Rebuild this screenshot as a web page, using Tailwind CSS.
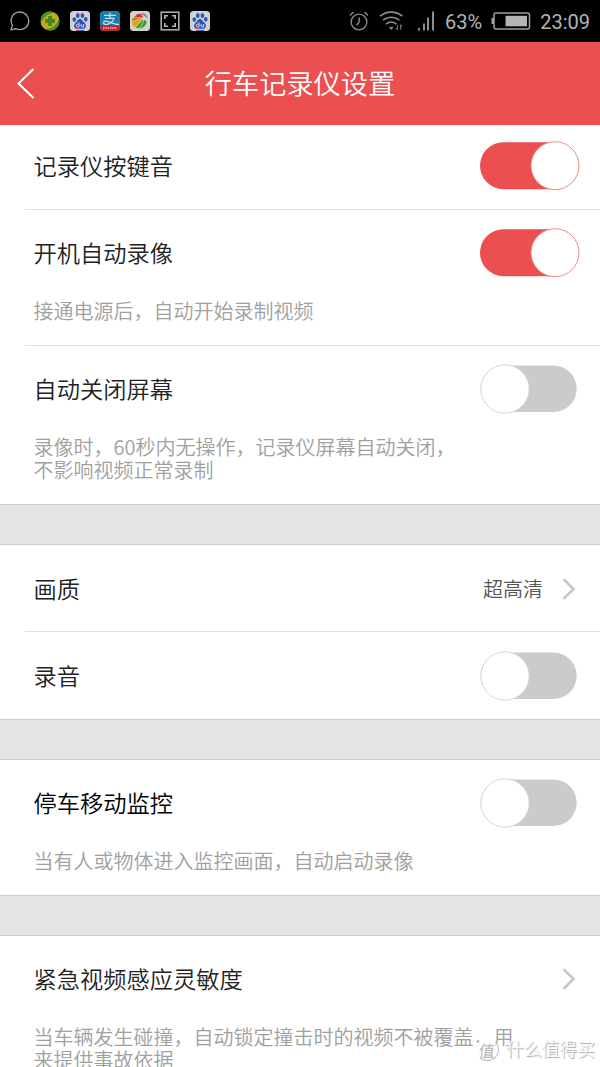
<!DOCTYPE html>
<html lang="zh-CN">
<head>
  <meta charset="UTF-8">
  <meta name="viewport" content="width=device-width, initial-scale=1.0">
  <title>行车记录仪设置</title>
  <!-- Tailwind CSS -->
  <script src="https://cdn.jsdelivr.net/npm/@tailwindcss/browser@4"></script>
</head>
<body class="bg-white">

  <!-- Shared shapes -->
  <svg class="hidden">
    <symbol id="toggle-on" viewBox="0 0 100 50">
      <rect x="0" y="1.2" width="97" height="47" rx="23.5" fill="#eb4f50"/>
      <circle cx="75" cy="24.7" r="24" fill="#fff" stroke="#f08a8b" stroke-width="1"/>
    </symbol>
    <symbol id="toggle-off" viewBox="0 0 100 50">
      <rect x="0.5" y="1.5" width="96.2" height="46.6" rx="23.3" fill="#cbcbcb"/>
      <circle cx="25" cy="25" r="24.2" fill="#fff" stroke="#d2d2d2" stroke-width="0.9"/>
    </symbol>
    <symbol id="arrow" viewBox="0 0 14 24">
      <path d="M1.5 2.2 L11.6 12 L1.5 21.8" fill="none" stroke="#c7c7cc" stroke-width="2.6"/>
    </symbol>
    <symbol id="paw" viewBox="0 0 20 20">
      <rect width="20" height="20" rx="3.5" fill="#cfd1d6"/>
      <g fill="#2c55b5">
        <ellipse cx="4.3" cy="8.6" rx="1.8" ry="2.4"/>
        <ellipse cx="7.8" cy="4.4" rx="1.8" ry="2.5"/>
        <ellipse cx="12.4" cy="4.4" rx="1.8" ry="2.5"/>
        <ellipse cx="15.8" cy="8.3" rx="1.8" ry="2.4"/>
        <path d="M10 8 C12.4 8 12.6 10.4 14.6 12 C17 14 16 17.8 13 17.8 H7 C4 17.8 3 14 5.4 12 C7.4 10.4 7.6 8 10 8Z"/>
      </g>
      <path d="M9 11.4 V16 M9 16 H7.6 A1.3 1.3 0 0 1 7.6 13.2 H9 M11.2 13 V15 Q11.2 16 12.2 16 H13.6 V13" fill="none" stroke="#d8dbe2" stroke-width="1"/>
      <path d="M6 19 H10 V20 H6Z" fill="#c04040"/>
      <path d="M10 19 H14 V20 H10Z" fill="#2c55b5"/>
    </symbol>
  </svg>

  <div class="flex h-[1067px] w-[600px] flex-col overflow-hidden font-['Noto_Sans_CJK_SC',sans-serif] font-[350] text-[#222]">

    <!-- Status bar -->
    <div class="flex h-[42px] shrink-0 items-center bg-black px-[10px] font-[Roboto,sans-serif] text-xl font-normal text-[#b4b4b4]">
      <div class="flex gap-[10px]">
        <svg class="size-5" viewBox="0 0 20 20" fill="none" stroke="#a8a8a8" stroke-width="1.3"><path d="M1 18.9 L2.4 14.4 A8.8 8.8 0 1 1 5.8 17.6 Z" stroke-linejoin="round"/></svg>
        <svg class="size-5" viewBox="0 0 20 20">
          <circle cx="10" cy="10" r="9.5" fill="#c9a81c"/>
          <path d="M1 7 C3 1 10 -1 15 2 C9 2 4 5 1 12Z M19 13 C17 19 10 21 5 18 C11 18 16 15 19 8Z" fill="#3f962b"/>
          <path d="M8 5 H12 V8 H15 V12 H12 V15 H8 V12 H5 V8 H8Z" fill="#3b8b23"/>
        </svg>
        <svg class="size-5"><use href="#paw"/></svg>
        <svg class="size-5" viewBox="0 0 20 20">
          <rect width="20" height="20" rx="3.5" fill="#1580ae"/>
          <path d="M0 14 H20 V16.5 A3.5 3.5 0 0 1 16.5 20 H3.5 A3.5 3.5 0 0 1 0 16.5Z" fill="#b72a2c"/>
          <path d="M4 4.3 H16 M10 1.8 V7 M5 7.3 H14 C13 11 9 13.6 6 13.6 C2.5 13.6 3 10 6 10.2 C10 10.5 13 13.5 19 13.5" fill="none" stroke="#d0d8de" stroke-width="1.3"/>
          <path d="M3 17 H17" stroke="#dc9c9c" stroke-width="2" stroke-dasharray="1.5 .8"/>
        </svg>
        <svg class="size-5" viewBox="0 0 20 20">
          <rect width="20" height="20" rx="3.5" fill="#d2d2cf"/>
          <path d="M4.500 6 C6 3 9 2 11 3 L13 6Z" fill="#c93a2c"/>
          <path d="M2 10.500 C2 8 3 7 4 6.500 H15 C11 7 7 8 2 10.500Z" fill="#dc6c1e"/>
          <path d="M2 11.500 C6 9 10 7.800 13 7.800 L5 16 C3 15 2 14 2 11.500Z" fill="#d8a714"/>
          <path d="M5.500 16.500 L13 8.500 C13 12 11 16 8.500 17.500Z" fill="#489b2a"/>
          <path d="M10 17.500 C12.500 14.500 13.500 12 13.800 9 L16.500 10 C17 13 14 17 10 17.500Z" fill="#319b32"/>
          <path d="M11 2 C15 2 17 4 18 8 C16 5.500 13 4.500 11 2Z" fill="#ac62c2"/>
        </svg>
        <svg class="size-5" viewBox="0 0 20 20" fill="none" stroke="#b4b4b4">
          <rect x="1.2" y="1.2" width="17.6" height="17.6" stroke-width="1.5"/>
          <path d="M4.8 8 V4.8 H8 M12 4.8 H15.2 V8 M15.2 12 V15.2 H12 M8 15.2 H4.8 V12" stroke-width="1.6"/>
        </svg>
        <svg class="size-5"><use href="#paw"/></svg>
      </div>

      <div class="ml-auto flex items-center">
        <!-- Alarm -->
        <svg class="mr-[10px] h-5 w-5" viewBox="0 0 20 20" fill="none" stroke="#8c8c8c" stroke-width="1.4">
          <circle cx="10" cy="11" r="7.9"/>
          <path d="M10.2 6.5 V11 L7.5 14.3 M1 4.5 L4.5 1 M15.5 1 L19 4.5"/>
        </svg>
        <!-- Wifi -->
        <svg class="mr-[14px] h-5 w-[25px]" viewBox="0 0 25 20" fill="none" stroke="#8c8c8c" stroke-width="1.6">
          <path d="M1 5.2 C7.5 -.3 17 -.3 23.5 5.2 M4 9.2 C9 5.200 15.5 5.200 20.5 9.2 M7 13.2 C10.5 10.3 14 10.3 17.5 13.2"/>
          <path d="M9.8 16 H14.6 L12.2 19Z" fill="#8c8c8c" stroke="none"/>
          <path d="M18.5 14 V18.5 M17 17 L18.5 19 M21.5 19 V14 M23 16 L21.5 13.5" stroke="#666" stroke-width="1.2"/>
        </svg>
        <!-- Signal -->
        <svg class="mr-[10px] h-5 w-[17px]" viewBox="0 0 17 20" fill="#8c8c8c">
          <rect x="0" y="17" width="2" height="2.500"/>
          <rect x="5" y="12.500" width="2" height="7"/>
          <rect x="9" y="6.500" width="2" height="13"/>
          <rect x="14" y="0.500" width="2" height="19"/>
        </svg>
        <span class="pt-[2px]">63%</span>
        <!-- Battery -->
        <svg class="ml-[9px] mr-[9px] h-[18px] w-[40px]" viewBox="0 0 40 18">
          <rect x="3" y="1" width="35.5" height="16" rx="2" fill="none" stroke="#a0a0a0" stroke-width="1.5"/>
          <rect x="0.500" y="6" width="2.500" height="6" fill="#a0a0a0"/>
          <rect x="14.5" y="3.8" width="21.5" height="10.5" fill="#b4b4b4"/>
        </svg>
        <span class="pt-[2px]">23:09</span>
      </div>
    </div>

    <!-- Title bar -->
    <header class="grid h-[83px] shrink-0 grid-cols-[100px_1fr_100px] items-center bg-[#eb4f50] text-white">
      <svg class="ml-4 h-8 w-5" viewBox="0 0 20 32" fill="none" stroke="#fff" stroke-width="2"><path d="M17.5 1 L2.5 15.5 L17.5 30"/></svg>
      <h1 class="pb-[2px] text-center text-[27.2px] leading-none font-[350]">行车记录仪设置</h1>
    </header>

    <!-- Settings -->
    <main class="shrink-0">
      <section class="border-b border-[#cfcfcf]">
        <div class="ml-[25px] flex h-[85px] items-center justify-between border-b border-[#e0e0e0] pb-[3px] pl-[8.5px] pr-5">
          <span class="text-[23.25px] leading-none">记录仪按键音</span>
          <svg class="h-[50px] w-[100px]"><use href="#toggle-on"/></svg>
        </div>

        <div class="ml-[25px] border-b border-[#e0e0e0] pl-[8.5px] pr-5">
          <div class="flex h-[87px] items-center justify-between pb-[2px]">
            <span class="text-[23.25px] leading-none">开机自动录像</span>
            <svg class="h-[50px] w-[100px]"><use href="#toggle-on"/></svg>
          </div>
          <p class="h-[48px] pt-[2px] text-[20px] leading-[23px] text-[#a0a0a0]">接通电源后，自动开始录制视频</p>
        </div>

        <div class="ml-[25px] pl-[8.5px] pr-5">
          <div class="flex h-[87px] items-center justify-between pb-[2px]">
            <span class="text-[23.25px] leading-none">自动关闭屏幕</span>
            <svg class="h-[50px] w-[100px]"><use href="#toggle-off"/></svg>
          </div>
          <p class="h-[71px] pt-[2px] text-[20px] leading-[23px] text-[#a0a0a0]">录像时，60秒内无操作，记录仪屏幕自动关闭，<br>不影响视频正常录制</p>
        </div>
      </section>

      <div class="h-[39px] bg-[#e4e4e4]"></div>

      <section class="border-y border-[#cfcfcf]">
        <div class="ml-[25px] flex h-[87px] items-center border-b border-[#e0e0e0] pt-[1px] pl-[8.5px] pr-6">
          <span class="text-[23.25px] leading-none">画质</span>
          <span class="ml-auto text-[20px] leading-none text-[#555]">超高清</span>
          <svg class="ml-[19px] h-6 w-[14px]"><use href="#arrow"/></svg>
        </div>
        <div class="ml-[25px] flex h-[87px] items-center justify-between pl-[8.5px] pr-5">
          <span class="text-[23.25px] leading-none">录音</span>
          <svg class="h-[50px] w-[100px]"><use href="#toggle-off"/></svg>
        </div>
      </section>

      <div class="h-[39px] bg-[#e4e4e4]"></div>

      <section class="border-y border-[#cfcfcf] pl-[33.5px] pr-5">
        <div class="flex h-[87px] items-center justify-between pb-[2px]">
          <span class="text-[23.25px] leading-none text-black">停车移动监控</span>
          <svg class="h-[50px] w-[100px]"><use href="#toggle-off"/></svg>
        </div>
        <p class="h-[48px] pt-[2px] text-[20px] leading-[23px] text-[#a0a0a0]">当有人或物体进入监控画面，自动启动录像</p>
      </section>

      <div class="h-[39px] bg-[#e4e4e4]"></div>

      <section class="border-t border-[#cfcfcf] pl-[33.5px] pr-6">
        <div class="flex h-[87px] items-center justify-between pb-[2px]">
          <span class="text-[23.25px] leading-none">紧急视频感应灵敏度</span>
          <svg class="h-6 w-[14px]"><use href="#arrow"/></svg>
        </div>
        <p class="pt-[2px] text-[20px] leading-[23px] text-[#a0a0a0]">当车辆发生碰撞，自动锁定撞击时的视频不被覆盖，用<br>来提供事故依据</p>
      </section>
    </main>
  </div>

  <!-- Watermark -->
  <div class="absolute left-[476px] top-[1038px] flex items-center gap-[7px] font-['Noto_Sans_CJK_SC',sans-serif] font-[350]">
    <span class="flex size-[23px] items-center justify-center rounded-full border border-white border-r-[#c4c4c4] border-b-[#c4c4c4] bg-white/80 text-[16px] leading-none text-[#b0b0b0]"><i class="-skew-x-6 not-italic">值</i></span>
    <span class="pb-[1px] text-[17.8px] leading-none text-[#fafafa] [text-shadow:1px_1px_1px_#a8a8a8]">什么值得买</span>
  </div>

</body>
</html>
